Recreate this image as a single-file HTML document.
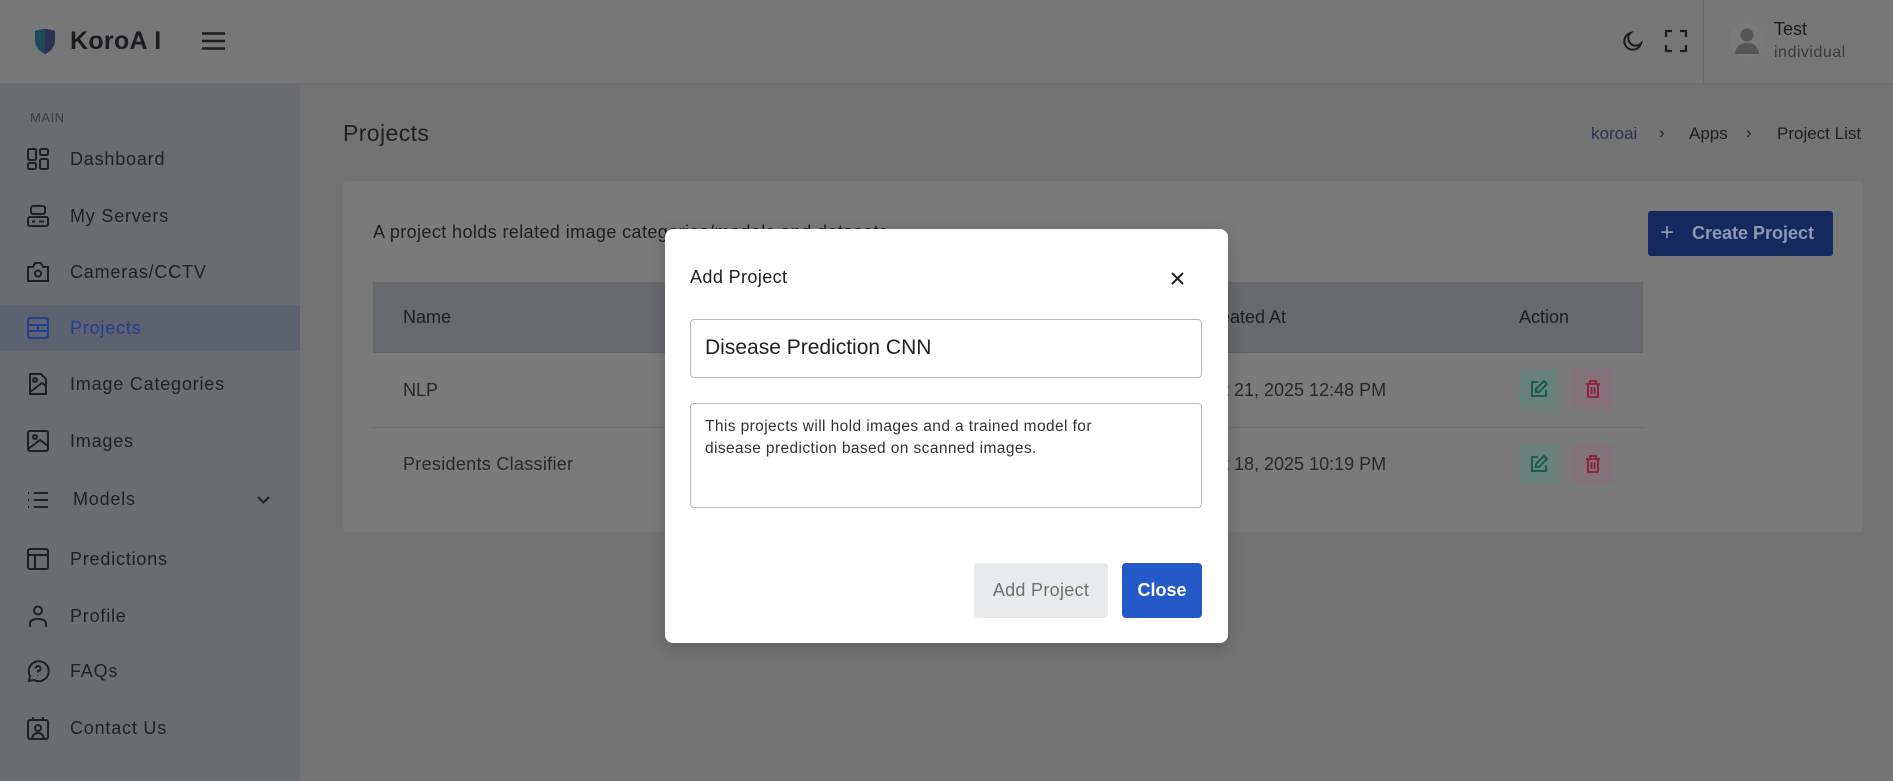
<!DOCTYPE html>
<html><head><meta charset="utf-8"><style>
*{margin:0;padding:0;box-sizing:border-box}
body{width:1893px;height:781px;overflow:hidden;background:#737373;font-family:"Liberation Sans",sans-serif;color:#1e1f22;position:relative}
.hdr{position:absolute;left:0;top:0;width:1893px;height:84px;background:#777;border-bottom:1px solid #6e6e6e}
.side{position:absolute;left:0;top:84px;width:300px;height:697px;background:#6b6c6f}
.abs{position:absolute}
.nav{position:absolute;left:70px;font-size:18px;color:#202124;letter-spacing:0.8px}
.ic{position:absolute;left:27px;width:22px;height:22px}
svg{overflow:visible}
</style></head><body>
<div class="hdr"></div>
<div class="side"></div>
<svg class="abs" style="left:33px;top:28px" width="24" height="27" viewBox="0 0 24 27"><path d="M2 3 Q12 -1 22 3 L22 13 Q21 22 12 26 Q3 22 2 13Z" fill="#1d4a5a"/><path d="M12 1 L22 3 L22 13 Q21 22 12 26Z" fill="#3b2250" opacity=".7"/></svg>
<div class="abs" style="left:70px;top:27px;font-size:25px;font-weight:bold;color:#1b1c1f;letter-spacing:0.3px">KoroA I</div>
<svg class="abs" style="left:202px;top:32px" width="23" height="18"><path d="M0 1.5H23M0 9H23M0 16.5H23" stroke="#1b1c1f" stroke-width="2.6"/></svg>
<svg class="abs" style="left:1621px;top:29px" width="24" height="24" viewBox="0 0 24 24"><path d="M20 14.5A8.5 8.5 0 1 1 9.5 4 7 7 0 0 0 20 14.5Z" fill="none" stroke="#1b1c1f" stroke-width="2"/></svg>
<svg class="abs" style="left:1665px;top:30px" width="22" height="22" viewBox="0 0 22 22"><path d="M1 7V1H7M15 1H21V7M21 15V21H15M7 21H1V15" fill="none" stroke="#1b1c1f" stroke-width="2.2"/></svg>
<div class="abs" style="left:1703px;top:0;width:1px;height:84px;background:#6a6a6a"></div>
<div class="abs" style="left:1730px;top:23px;width:34px;height:34px;border-radius:50%;background:#7a7a7a"></div>
<svg class="abs" style="left:1730px;top:23px" width="34" height="34"><circle cx="17" cy="12" r="6.5" fill="#555"/><path d="M5 31Q6 20 17 20Q28 20 29 31Z" fill="#555"/></svg>
<div class="abs" style="left:1774px;top:19px;font-size:18px;color:#1b1c1f">Test</div>
<div class="abs" style="left:1774px;top:44px;font-size:16px;color:#3a3b3e;letter-spacing:.5px">individual</div>
<div class="abs" style="left:30px;top:110px;font-size:13px;color:#3c3d40;letter-spacing:.5px">MAIN</div>
<div class="abs" style="left:0;top:305px;width:300px;height:46px;background:#5c6270"></div>
<svg class="ic" style="top:148px" viewBox="0 0 22 22"><g fill="none" stroke="#1f2023" stroke-width="2"><rect x="1" y="1" width="8" height="11" rx="1.5"/><rect x="13" y="1" width="8" height="6" rx="1.5"/><rect x="1" y="15" width="8" height="6" rx="1.5"/><rect x="13" y="11" width="8" height="10" rx="1.5"/></g></svg>
<div class="nav" style="top:149px">Dashboard</div>
<svg class="ic" style="top:205px" viewBox="0 0 22 22"><g fill="none" stroke="#1f2023" stroke-width="2"><rect x="4" y="1" width="14" height="8" rx="2"/><rect x="1" y="12" width="20" height="9" rx="2"/><path d="M5 16.5H8M12 16.5H17"/></g></svg>
<div class="nav" style="top:206px">My Servers</div>
<svg class="ic" style="top:261px" viewBox="0 0 22 22"><g fill="none" stroke="#1f2023" stroke-width="2"><path d="M1 6H6L8 2H14L16 6H21V20H1Z"/><circle cx="11" cy="12.5" r="3"/></g></svg>
<div class="nav" style="top:262px">Cameras/CCTV</div>
<svg class="ic" style="top:317px" viewBox="0 0 22 22"><g fill="none" stroke="#243f8f" stroke-width="2"><rect x="1" y="1" width="20" height="20" rx="2"/><path d="M1 8H21M1 14H21M11 8V14"/></g></svg>
<div class="nav" style="top:318px;color:#243f8f">Projects</div>
<svg class="ic" style="top:373px" viewBox="0 0 22 22"><g fill="none" stroke="#1f2023" stroke-width="2"><path d="M3 1H14L19 6V21H3Z"/><circle cx="8" cy="7" r="2"/><path d="M3 19L15 10L19 13"/></g></svg>
<div class="nav" style="top:374px">Image Categories</div>
<svg class="ic" style="top:430px" viewBox="0 0 22 22"><g fill="none" stroke="#1f2023" stroke-width="2"><rect x="1" y="1" width="20" height="20" rx="2"/><circle cx="8" cy="7" r="2"/><path d="M1 19L13 10L21 16"/></g></svg>
<div class="nav" style="top:431px">Images</div>
<svg class="ic" style="top:489px" viewBox="0 0 22 22"><g fill="none" stroke="#1f2023" stroke-width="2"><path d="M1 4H2M1 11H2M1 18H2M7 4H21M7 11H21M7 18H21"/></g></svg>
<div class="nav" style="top:489px;left:73px">Models</div>
<svg class="abs" style="left:257px;top:496px" width="13" height="8"><path d="M1 1L6.5 6.5L12 1" fill="none" stroke="#1f2023" stroke-width="2"/></svg>
<svg class="ic" style="top:548px" viewBox="0 0 22 22"><g fill="none" stroke="#1f2023" stroke-width="2"><rect x="1" y="1" width="20" height="20" rx="2"/><path d="M1 7H21M8 7V21"/></g></svg>
<div class="nav" style="top:549px">Predictions</div>
<svg class="ic" style="top:605px" viewBox="0 0 22 22"><g fill="none" stroke="#1f2023" stroke-width="2"><circle cx="11" cy="5.5" r="4"/><path d="M3 22V19Q3 14 11 14Q19 14 19 19V22"/></g></svg>
<div class="nav" style="top:606px">Profile</div>
<svg class="ic" style="top:660px" viewBox="0 0 22 22"><g fill="none" stroke="#1f2023" stroke-width="2"><path d="M2 21L3 16A10 10 0 1 1 7 20Z"/><path d="M8.5 8.5A2.5 2.5 0 1 1 11 11V12.5M11 15.5V16"/></g></svg>
<div class="nav" style="top:661px">FAQs</div>
<svg class="ic" style="top:717px" viewBox="0 0 22 22"><g fill="none" stroke="#1f2023" stroke-width="2"><rect x="1" y="3" width="20" height="19" rx="2"/><path d="M6 0V3M16 0V3"/><circle cx="11" cy="11" r="3"/><path d="M5 22Q6 16 11 16Q16 16 17 22"/></g></svg>
<div class="nav" style="top:718px">Contact Us</div>
<div class="abs" style="left:343px;top:120px;font-size:23px;color:#1e1f22;letter-spacing:.4px">Projects</div>
<div class="abs" style="left:1591px;top:124px;font-size:17px;color:#2b3350">koroai</div>
<div class="abs" style="left:1659px;top:123px;font-size:17px;color:#1e1f22">›</div>
<div class="abs" style="left:1689px;top:124px;font-size:17px;color:#1e1f22">Apps</div>
<div class="abs" style="left:1746px;top:123px;font-size:17px;color:#1e1f22">›</div>
<div class="abs" style="left:1777px;top:124px;font-size:17px;color:#1e1f22">Project List</div>
<div class="abs" style="left:343px;top:181px;width:1520px;height:351px;background:#7a7a7a;border-radius:4px"></div>
<div class="abs" style="left:373px;top:222px;font-size:18px;color:#1e1f22;letter-spacing:.4px">A project holds related image categories/models and datasets.</div>
<div class="abs" style="left:1648px;top:211px;width:185px;height:45px;background:#15295f;border-radius:3px"></div>
<div class="abs" style="left:1660px;top:219px;font-size:24px;color:#8e98b5">+</div>
<div class="abs" style="left:1692px;top:223px;font-size:18px;font-weight:bold;color:#8e98b5">Create Project</div>
<div class="abs" style="left:373px;top:282px;width:1270px;height:71px;background:#68696c;border-bottom:1px solid #646464"></div>
<div class="abs" style="left:403px;top:307px;font-size:18px">Name</div>
<div class="abs" style="left:1201px;top:307px;font-size:18px">Created At</div>
<div class="abs" style="left:1519px;top:307px;font-size:18px">Action</div>
<div class="abs" style="left:373px;top:427px;width:1270px;height:1px;background:#6a6a6a"></div>
<div class="abs" style="left:403px;top:380px;font-size:18px;color:#27282b">NLP</div>
<div class="abs" style="left:403px;top:454px;font-size:18px;color:#27282b;letter-spacing:.3px">Presidents Classifier</div>
<div class="abs" style="left:1201px;top:380px;font-size:18px;color:#27282b">Oct 21, 2025 12:48 PM</div>
<div class="abs" style="left:1201px;top:454px;font-size:18px;color:#27282b">Oct 18, 2025 10:19 PM</div>
<div class="abs" style="left:1519px;top:369px;width:40px;height:40px;background:#6a807a;border-radius:4px"></div>
<div class="abs" style="left:1573px;top:369px;width:40px;height:40px;background:#84717a;border-radius:4px"></div>
<div class="abs" style="left:1519px;top:444px;width:40px;height:40px;background:#6a807a;border-radius:4px"></div>
<div class="abs" style="left:1573px;top:444px;width:40px;height:40px;background:#84717a;border-radius:4px"></div>
<svg class="abs" style="left:1530px;top:380px" width="18" height="18" viewBox="0 0 18 18"><path d="M8 2H2V16H16V10M14 1L17 4L9 12H6V9Z" fill="none" stroke="#0f5a48" stroke-width="1.8"/></svg>
<svg class="abs" style="left:1530px;top:455px" width="18" height="18" viewBox="0 0 18 18"><path d="M8 2H2V16H16V10M14 1L17 4L9 12H6V9Z" fill="none" stroke="#0f5a48" stroke-width="1.8"/></svg>
<svg class="abs" style="left:1585px;top:380px" width="16" height="18" viewBox="0 0 16 18"><path d="M1 4H15M5 4V1H11V4M3 4V17H13V4M6.5 7V14M9.5 7V14" fill="none" stroke="#8a1f35" stroke-width="1.8"/></svg>
<svg class="abs" style="left:1585px;top:455px" width="16" height="18" viewBox="0 0 16 18"><path d="M1 4H15M5 4V1H11V4M3 4V17H13V4M6.5 7V14M9.5 7V14" fill="none" stroke="#8a1f35" stroke-width="1.8"/></svg>
<div class="abs" style="left:665px;top:229px;width:563px;height:414px;background:#fff;border-radius:8px;box-shadow:0 4px 16px rgba(0,0,0,.2)"></div>
<div class="abs" style="left:690px;top:267px;font-size:18px;color:#1e1f22;letter-spacing:.4px">Add Project</div>
<svg class="abs" style="left:1171px;top:272px" width="13" height="13"><path d="M1 1L12 12M12 1L1 12" stroke="#1e1f22" stroke-width="2"/></svg>
<div class="abs" style="left:690px;top:319px;width:512px;height:59px;border:1.5px solid #b8b9bc;border-radius:4px"></div>
<div class="abs" style="left:705px;top:336px;font-size:21px;color:#222">Disease Prediction CNN</div>
<div class="abs" style="left:690px;top:403px;width:512px;height:105px;border:1.5px solid #b8b9bc;border-radius:4px"></div>
<div class="abs" style="left:705px;top:416px;font-size:15.5px;line-height:22px;color:#333;width:440px;letter-spacing:.4px">This projects will hold images and a trained model for disease prediction based on scanned images.</div>
<div class="abs" style="left:974px;top:563px;width:134px;height:55px;background:#e9eaec;border-radius:4px"></div>
<div class="abs" style="left:974px;top:580px;width:134px;text-align:center;font-size:18px;color:#6b6f75;letter-spacing:.3px">Add Project</div>
<div class="abs" style="left:1122px;top:563px;width:80px;height:55px;background:#2459c8;border-radius:4px"></div>
<div class="abs" style="left:1122px;top:580px;width:80px;text-align:center;font-size:18px;font-weight:bold;color:#fff">Close</div>
</body></html>
